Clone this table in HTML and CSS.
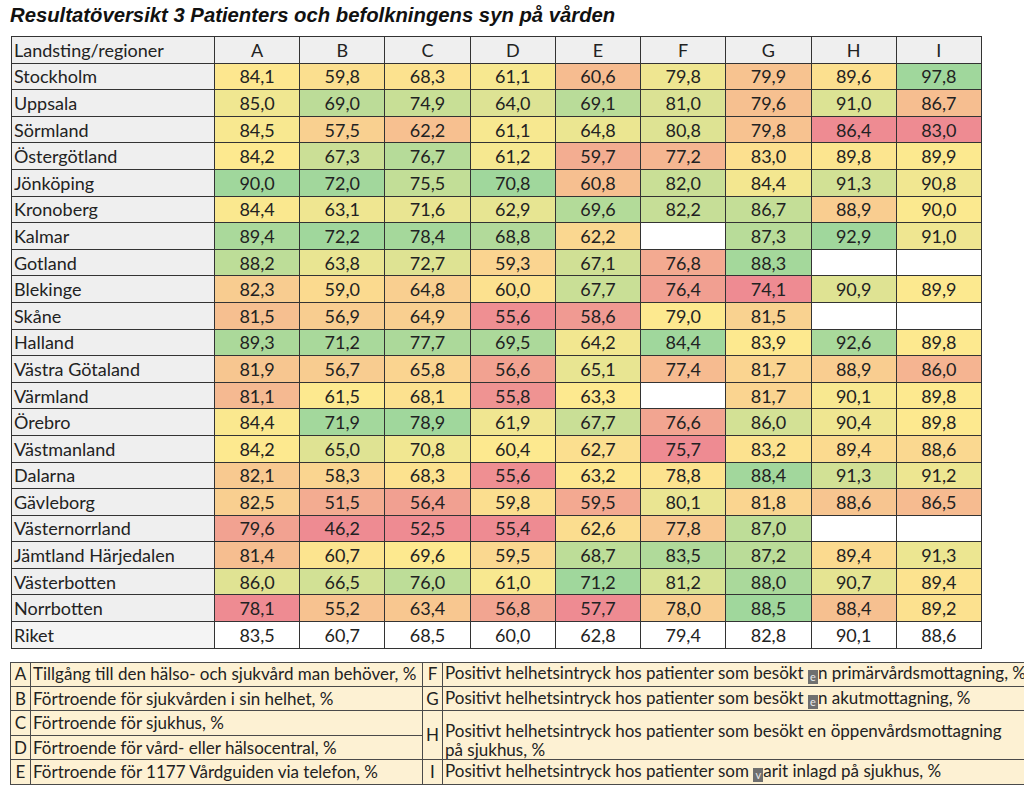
FILE: index.html
```html
<!DOCTYPE html>
<html lang="sv">
<head>
<meta charset="utf-8">
<title>Resultatöversikt 3</title>
<link rel="stylesheet" href="styles.css">
<script src="script.js" defer></script>
</head>
<body>
<div class="page">
  <h1 class="title">Resultatöversikt 3 Patienters och befolkningens syn på vården</h1>
  <table class="grid">
    <colgroup><col class="c-name"><col><col><col><col><col><col><col><col><col></colgroup>
    <thead>
      <tr><th class="name">Landsting/regioner</th><th>A</th><th>B</th><th>C</th><th>D</th><th>E</th><th>F</th><th>G</th><th>H</th><th>I</th></tr>
    </thead>
    <tbody>
      <tr class="region"><td class="name">Stockholm</td><td>84,1</td><td>59,8</td><td>68,3</td><td>61,1</td><td>60,6</td><td>79,8</td><td>79,9</td><td>89,6</td><td>97,8</td></tr>
      <tr class="region"><td class="name">Uppsala</td><td>85,0</td><td>69,0</td><td>74,9</td><td>64,0</td><td>69,1</td><td>81,0</td><td>79,6</td><td>91,0</td><td>86,7</td></tr>
      <tr class="region"><td class="name">Sörmland</td><td>84,5</td><td>57,5</td><td>62,2</td><td>61,1</td><td>64,8</td><td>80,8</td><td>79,8</td><td>86,4</td><td>83,0</td></tr>
      <tr class="region"><td class="name">Östergötland</td><td>84,2</td><td>67,3</td><td>76,7</td><td>61,2</td><td>59,7</td><td>77,2</td><td>83,0</td><td>89,8</td><td>89,9</td></tr>
      <tr class="region"><td class="name">Jönköping</td><td>90,0</td><td>72,0</td><td>75,5</td><td>70,8</td><td>60,8</td><td>82,0</td><td>84,4</td><td>91,3</td><td>90,8</td></tr>
      <tr class="region"><td class="name">Kronoberg</td><td>84,4</td><td>63,1</td><td>71,6</td><td>62,9</td><td>69,6</td><td>82,2</td><td>86,7</td><td>88,9</td><td>90,0</td></tr>
      <tr class="region"><td class="name">Kalmar</td><td>89,4</td><td>72,2</td><td>78,4</td><td>68,8</td><td>62,2</td><td></td><td>87,3</td><td>92,9</td><td>91,0</td></tr>
      <tr class="region"><td class="name">Gotland</td><td>88,2</td><td>63,8</td><td>72,7</td><td>59,3</td><td>67,1</td><td>76,8</td><td>88,3</td><td></td><td></td></tr>
      <tr class="region"><td class="name">Blekinge</td><td>82,3</td><td>59,0</td><td>64,8</td><td>60,0</td><td>67,7</td><td>76,4</td><td>74,1</td><td>90,9</td><td>89,9</td></tr>
      <tr class="region"><td class="name">Skåne</td><td>81,5</td><td>56,9</td><td>64,9</td><td>55,6</td><td>58,6</td><td>79,0</td><td>81,5</td><td></td><td></td></tr>
      <tr class="region"><td class="name">Halland</td><td>89,3</td><td>71,2</td><td>77,7</td><td>69,5</td><td>64,2</td><td>84,4</td><td>83,9</td><td>92,6</td><td>89,8</td></tr>
      <tr class="region"><td class="name">Västra Götaland</td><td>81,9</td><td>56,7</td><td>65,8</td><td>56,6</td><td>65,1</td><td>77,4</td><td>81,7</td><td>88,9</td><td>86,0</td></tr>
      <tr class="region"><td class="name">Värmland</td><td>81,1</td><td>61,5</td><td>68,1</td><td>55,8</td><td>63,3</td><td></td><td>81,7</td><td>90,1</td><td>89,8</td></tr>
      <tr class="region"><td class="name">Örebro</td><td>84,4</td><td>71,9</td><td>78,9</td><td>61,9</td><td>67,7</td><td>76,6</td><td>86,0</td><td>90,4</td><td>89,8</td></tr>
      <tr class="region"><td class="name">Västmanland</td><td>84,2</td><td>65,0</td><td>70,8</td><td>60,4</td><td>62,7</td><td>75,7</td><td>83,2</td><td>89,4</td><td>88,6</td></tr>
      <tr class="region"><td class="name">Dalarna</td><td>82,1</td><td>58,3</td><td>68,3</td><td>55,6</td><td>63,2</td><td>78,8</td><td>88,4</td><td>91,3</td><td>91,2</td></tr>
      <tr class="region"><td class="name">Gävleborg</td><td>82,5</td><td>51,5</td><td>56,4</td><td>59,8</td><td>59,5</td><td>80,1</td><td>81,8</td><td>88,6</td><td>86,5</td></tr>
      <tr class="region"><td class="name">Västernorrland</td><td>79,6</td><td>46,2</td><td>52,5</td><td>55,4</td><td>62,6</td><td>77,8</td><td>87,0</td><td></td><td></td></tr>
      <tr class="region"><td class="name">Jämtland Härjedalen</td><td>81,4</td><td>60,7</td><td>69,6</td><td>59,5</td><td>68,7</td><td>83,5</td><td>87,2</td><td>89,4</td><td>91,3</td></tr>
      <tr class="region"><td class="name">Västerbotten</td><td>86,0</td><td>66,5</td><td>76,0</td><td>61,0</td><td>71,2</td><td>81,2</td><td>88,0</td><td>90,7</td><td>89,4</td></tr>
      <tr class="region"><td class="name">Norrbotten</td><td>78,1</td><td>55,2</td><td>63,4</td><td>56,8</td><td>57,7</td><td>78,0</td><td>88,5</td><td>88,4</td><td>89,2</td></tr>
      <tr class="total"><td class="name">Riket</td><td>83,5</td><td>60,7</td><td>68,5</td><td>60,0</td><td>62,8</td><td>79,4</td><td>82,8</td><td>90,1</td><td>88,6</td></tr>
    </tbody>
  </table>

  <table class="legend">
    <colgroup><col class="l-key"><col class="l-text"><col class="l-key"><col class="l-text2"></colgroup>
    <tr><td class="key">A</td><td class="txt">Tillgång till den hälso- och sjukvård man behöver, %</td><td class="key">F</td><td class="txt">Positivt helhetsintryck hos patienter som besökt <span class="glyph">e</span>n primärvårdsmottagning, %</td></tr>
    <tr><td class="key">B</td><td class="txt">Förtroende för sjukvården i sin helhet, %</td><td class="key">G</td><td class="txt">Positivt helhetsintryck hos patienter som besökt <span class="glyph">e</span>n akutmottagning, %</td></tr>
    <tr><td class="key">C</td><td class="txt">Förtroende för sjukhus, %</td><td class="key" rowspan="2">H</td><td class="txt wrap" rowspan="2">Positivt helhetsintryck hos patienter som besökt en öppenvårdsmottagning<br>på sjukhus, %</td></tr>
    <tr><td class="key">D</td><td class="txt">Förtroende för vård- eller hälsocentral, %</td></tr>
    <tr><td class="key">E</td><td class="txt">Förtroende för 1177 Vårdguiden via telefon, %</td><td class="key">I</td><td class="txt">Positivt helhetsintryck hos patienter som <span class="glyph">v</span>arit inlagd på sjukhus, %</td></tr>
  </table>
</div>
</body>
</html>
```

FILE: styles.css
```css
html, body {
  margin: 0;
  background: #ffffff;
}

.page {
  width: 1024px;
  height: 809px;
  overflow: hidden;
}

.title {
  margin: 0 0 10px 0;
  padding: 4px 0 0 10px;
  font: italic bold 20.3px/22px "Liberation Sans", Arial, sans-serif;
  color: #111111;
}

.grid {
  margin-left: 11px;
  width: 971px;
  border-collapse: collapse;
  table-layout: fixed;
  font: 18px/20px Lato, "Open Sans", sans-serif;
  color: #222222;
}

.grid .c-name {
  width: 203px;
}

.grid tr {
  height: 26.6px;
}

.grid th,
.grid td {
  border: 1px solid #333333;
  padding: 0;
  text-align: center;
  font-weight: normal;
  white-space: nowrap;
}

.grid thead th {
  background: #efefef;
}

.grid .name {
  text-align: left;
  padding-left: 2px;
  background: #efefef;
}

.grid .total td {
  background: #ffffff;
}

.grid .total .name {
  background: #f4f4f4;
}

.legend {
  margin: 13px 0 0 10px;
  width: 1040px;
  border-collapse: collapse;
  table-layout: fixed;
  font: 17px/18px Lato, "Open Sans", sans-serif;
  color: #222222;
  background: #fdf1d3;
}

.legend .l-key {
  width: 20px;
}

.legend .l-text {
  width: 392px;
}

.legend .l-text2 {
  width: 608px;
}

.legend tr {
  height: 24.4px;
}

.legend td {
  border: 1px solid #4a4a4a;
  padding: 0;
  white-space: nowrap;
}

.legend .key {
  text-align: center;
}

.legend .txt {
  padding-left: 2px;
}

.legend .wrap {
  vertical-align: bottom;
  line-height: 19px;
  padding-bottom: 0;
}

.glyph {
  display: inline-block;
  width: 10px;
  height: 14px;
  background: #6f6f6f;
  color: #e8e8e8;
  font-size: 11px;
  line-height: 14px;
  text-align: center;
  vertical-align: -2px;
}
```

FILE: script.js
```js
(function () {
  var RED = [238, 139, 146];
  var YEL = [253, 233, 143];
  var GRN = [160, 215, 156];

  function mix(a, b, t) {
    return 'rgb(' + a.map(function (v, i) {
      return Math.round(v + (b[i] - v) * t);
    }).join(',') + ')';
  }

  var rows = Array.prototype.slice.call(document.querySelectorAll('.grid tr.region'));
  for (var c = 1; c <= 9; c++) {
    var cells = [];
    rows.forEach(function (r) {
      var td = r.children[c];
      var txt = td.textContent.trim();
      if (txt) cells.push({ td: td, v: parseFloat(txt.replace(',', '.')) });
    });
    var vals = cells.map(function (o) { return o.v; }).sort(function (a, b) { return a - b; });
    var n = vals.length;
    var min = vals[0], max = vals[n - 1];
    var med = n % 2 ? vals[(n - 1) / 2] : (vals[n / 2 - 1] + vals[n / 2]) / 2;
    cells.forEach(function (o) {
      var col;
      if (o.v <= med) {
        col = mix(RED, YEL, med === min ? 1 : (o.v - min) / (med - min));
      } else {
        col = mix(YEL, GRN, (o.v - med) / (max - med));
      }
      o.td.style.backgroundColor = col;
    });
  }
})();
```
